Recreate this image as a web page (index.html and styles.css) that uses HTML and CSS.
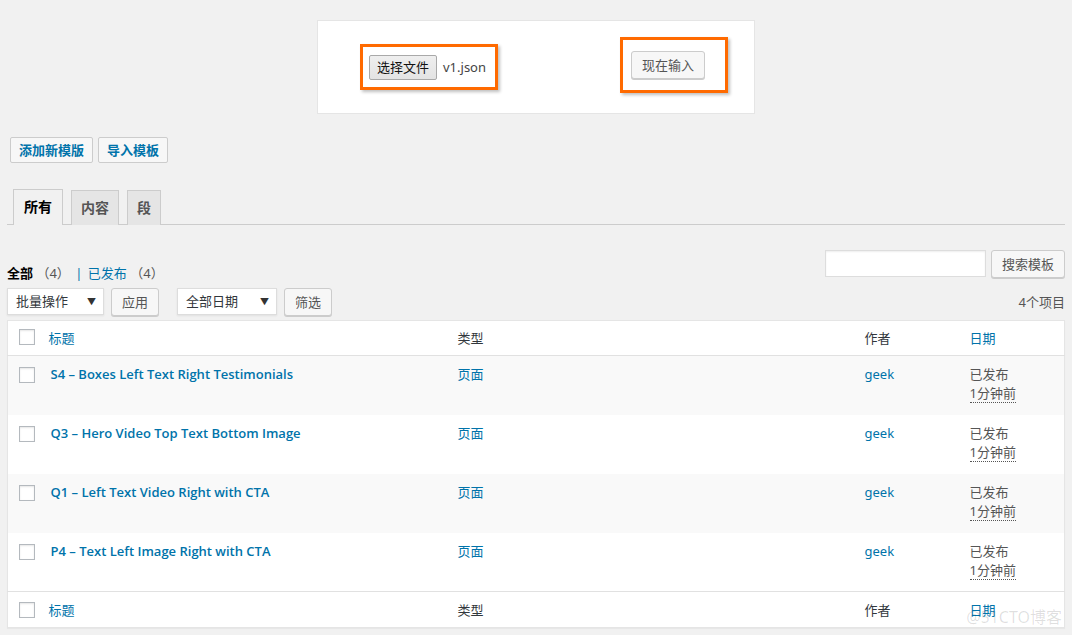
FILE: index.html
```html
<!DOCTYPE html>
<html lang="zh">
<head>
<meta charset="utf-8">
<title>模板</title>
<link rel="stylesheet" href="styles.css">
</head>
<body>
<div class="wrap">
  <div class="upload-box">
    <span class="mark mark-file">
      <span class="file-btn">选择文件</span>
      <span class="file-name">v1.json</span>
    </span>
    <span class="mark mark-import">
      <span class="btn">现在输入</span>
    </span>
  </div>

  <div class="actions">
    <span class="btn btn-action">添加新模版</span>
    <span class="btn btn-action">导入模板</span>
  </div>

  <div class="tabs">
    <span class="tab active">所有</span>
    <span class="tab">内容</span>
    <span class="tab">段</span>
  </div>

  <div class="filters">
    <div class="subsubsub">
      <b class="current">全部</b> <span class="count">（4）</span> <span class="sep">|</span> <a class="link">已发布</a> <span class="count">（4）</span>
    </div>
    <div class="search">
      <span class="search-input"></span>
      <span class="btn">搜索模板</span>
    </div>
  </div>

  <div class="tablenav">
    <div class="bulk">
      <span class="select sel-bulk">批量操作<i class="arrow">▼</i></span>
      <span class="btn">应用</span>
      <span class="select sel-date">全部日期<i class="arrow">▼</i></span>
      <span class="btn">筛选</span>
    </div>
    <span class="num">4个项目</span>
  </div>

  <table class="list">
    <colgroup>
      <col class="c-cb"><col class="c-title"><col class="c-type"><col class="c-author"><col class="c-date">
    </colgroup>
    <thead>
      <tr>
        <th class="cb"><span class="check"></span></th>
        <th class="th-link">标题</th>
        <th>类型</th>
        <th>作者</th>
        <th class="th-link">日期</th>
      </tr>
    </thead>
    <tbody>
      <tr class="alt">
        <td class="cb"><span class="check"></span></td>
        <td class="title"><a>S4 – Boxes Left Text Right Testimonials</a></td>
        <td class="link">页面</td>
        <td class="link">geek</td>
        <td class="date">已发布<br><abbr>1分钟前</abbr></td>
      </tr>
      <tr>
        <td class="cb"><span class="check"></span></td>
        <td class="title"><a>Q3 – Hero Video Top Text Bottom Image</a></td>
        <td class="link">页面</td>
        <td class="link">geek</td>
        <td class="date">已发布<br><abbr>1分钟前</abbr></td>
      </tr>
      <tr class="alt">
        <td class="cb"><span class="check"></span></td>
        <td class="title"><a>Q1 – Left Text Video Right with CTA</a></td>
        <td class="link">页面</td>
        <td class="link">geek</td>
        <td class="date">已发布<br><abbr>1分钟前</abbr></td>
      </tr>
      <tr>
        <td class="cb"><span class="check"></span></td>
        <td class="title"><a>P4 – Text Left Image Right with CTA</a></td>
        <td class="link">页面</td>
        <td class="link">geek</td>
        <td class="date">已发布<br><abbr>1分钟前</abbr></td>
      </tr>
    </tbody>
    <tfoot>
      <tr>
        <th class="cb"><span class="check"></span></th>
        <th class="th-link">标题</th>
        <th>类型</th>
        <th>作者</th>
        <th class="th-link">日期</th>
      </tr>
    </tfoot>
  </table>
  <span class="watermark">@51CTO博客</span>
</div>
</body>
</html>
```
FILE: styles.css
```css
html, body {
  margin: 0;
  padding: 0;
  background: #f1f1f1;
}
body {
  font-family: "Noto Sans", "Noto Sans CJK SC", sans-serif;
  font-size: 13px;
  color: #444;
}
.wrap {
  position: relative;
  padding: 20px 7px 0 7px;
  height: 635px;
  box-sizing: border-box;
  overflow: hidden;
}
.upload-box {
  width: 394px;
  height: 92px;
  margin: 0 auto;
  background: #fff;
  border: 1px solid #e5e5e5;
  display: flex;
  align-items: center;
  padding-left: 42px;
}
.mark {
  border: 3px solid #ff6a00;
  box-shadow: 2px 2px 3px rgba(0,0,0,0.25);
  display: flex;
  align-items: center;
  box-sizing: border-box;
}
.mark-file {
  width: 138px;
  height: 46px;
  padding-left: 6px;
}
.mark-import {
  width: 108px;
  height: 56px;
  padding-left: 8px;
  margin-left: 122px;
  margin-top: -4px;
}
.file-btn {
  display: inline-block;
  height: 25px;
  line-height: 23px;
  box-sizing: border-box;
  padding: 0 7px;
  border: 1px solid #a9a9a9;
  border-radius: 2px;
  background: linear-gradient(#efefef, #e3e3e3);
  color: #111;
  font-size: 13px;
}
.file-name {
  margin-left: 6px;
  color: #444;
  font-size: 13px;
}
.btn {
  display: inline-block;
  height: 28px;
  line-height: 26px;
  box-sizing: border-box;
  padding: 0 10px;
  border: 1px solid #ccc;
  border-radius: 3px;
  background: #f7f7f7;
  box-shadow: 0 1px 0 #ccc;
  color: #555;
  font-size: 13px;
  white-space: nowrap;
}
.actions {
  display: flex;
  gap: 5px;
  margin-top: 23px;
  padding-left: 3px;
}
.btn-action {
  height: 26px;
  line-height: 24px;
  padding: 0 8px;
  border-radius: 2px;
  box-shadow: none;
  color: #0073aa;
  font-weight: 600;
}
.tabs {
  display: flex;
  gap: 8px;
  margin-top: 26px;
  padding-left: 6px;
  border-bottom: 1px solid #ccc;
  height: 35px;
  align-items: flex-end;
}
.tab {
  display: block;
  height: 35px;
  line-height: 33px;
  box-sizing: border-box;
  padding: 0 9px;
  border: 1px solid #ccc;
  border-bottom: none;
  background: #e5e5e5;
  color: #555;
  font-size: 14px;
  font-weight: 600;
  margin-bottom: -1px;
}
.tab.active {
  background: #f1f1f1;
  color: #000;
  height: 36px;
  padding: 0 10px;
}
.filters {
  display: flex;
  justify-content: space-between;
  margin-top: 26px;
  height: 28px;
}
.subsubsub {
  color: #555;
  line-height: 20px;
  align-self: flex-end;
  margin-bottom: -4px;
}
.subsubsub .current {
  color: #000;
  font-weight: 600;
}
.count { color: #555; }
.sep { color: #0073aa; margin: 0 2px; }
.link, a { color: #0073aa; text-decoration: none; }
.search {
  display: flex;
  gap: 5px;
  align-items: flex-start;
  margin-top: -1px;
}
.search-input {
  display: block;
  width: 161px;
  height: 27px;
  box-sizing: border-box;
  background: #fff;
  border: 1px solid #ddd;
  box-shadow: inset 0 1px 2px rgba(0,0,0,0.07);
}
.search .btn { width: 74px; height: 28px; }
.tablenav {
  display: flex;
  justify-content: space-between;
  align-items: center;
  margin-top: 9px;
  height: 27px;
}
.bulk {
  display: flex;
  gap: 7px;
  align-items: center;
}
.select {
  position: relative;
  display: block;
  height: 27px;
  line-height: 25px;
  box-sizing: border-box;
  padding: 0 8px;
  background: #fff;
  border: 1px solid #ddd;
  box-shadow: 0 1px 2px rgba(0,0,0,0.07);
  color: #32373c;
  font-size: 13px;
}
.sel-bulk { width: 97px; }
.sel-date { width: 100px; margin-left: 11px; }
.arrow {
  position: absolute;
  right: 7px;
  top: 0;
  font-style: normal;
  font-size: 9px;
  color: #333;
}
.num { color: #555; }
.list {
  margin-top: 5px;
  width: 100%;
  border-collapse: collapse;
  table-layout: fixed;
  background: #fff;
  border: 1px solid #e5e5e5;
  box-shadow: 0 1px 1px rgba(0,0,0,0.04);
}
.c-cb { width: 31px; }
.c-title { width: 409px; }
.c-type { width: 407px; }
.c-author { width: 105px; }
.c-date { width: auto; }
th {
  text-align: left;
  font-weight: 400;
  color: #32373c;
  height: 35px;
  padding: 0 10px 2px;
  box-sizing: border-box;
  font-size: 13px;
}
thead th { border-bottom: 1px solid #e1e1e1; }
tfoot th { border-top: 1px solid #e1e1e1; height: 36px; padding-bottom: 0; }
th.th-link { color: #0073aa; }
th.cb, td.cb { padding-left: 11px; padding-right: 0; }
td {
  vertical-align: top;
  height: 59px;
  box-sizing: border-box;
  padding: 9px 10px 0;
  line-height: 19px;
  color: #555;
}
td.cb { padding-top: 11px; }
tr.alt td { background: #f9f9f9; }
td.title { padding-left: 12px; }
td.title a {
  font-family: "Open Sans", "Noto Sans CJK SC", sans-serif;
  font-size: 13px;
  font-weight: 600;
}
td.date { color: #555; }
abbr {
  text-decoration: none;
  border-bottom: 1px dotted #555;
}
.check {
  display: block;
  width: 16px;
  height: 16px;
  box-sizing: border-box;
  border: 1px solid #b4b9be;
  background: #fff;
  box-shadow: inset 0 1px 2px rgba(0,0,0,0.1);
}
.watermark {
  position: absolute;
  right: 10px;
  top: 604px;
  font-size: 16px;
  color: rgba(0,0,0,0.13);
  pointer-events: none;
}
```
